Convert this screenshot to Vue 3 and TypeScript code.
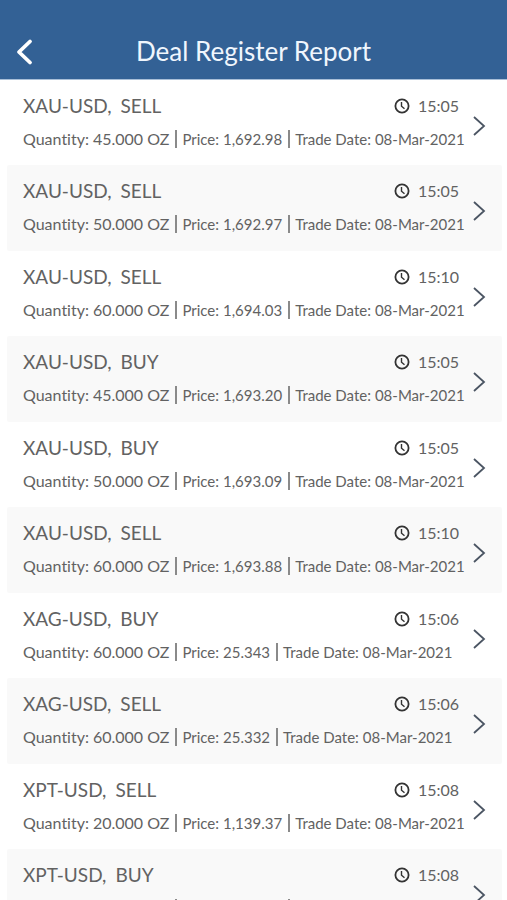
<script setup lang="ts">
interface Deal {
  pair: string
  side: 'BUY' | 'SELL'
  time: string
  quantity: string
  price: string
  date: string
}

function deal(pair: string, side: Deal['side'], time: string, quantity: string, price: string): Deal {
  return { pair, side, time, quantity, price, date: '08-Mar-2021' }
}

const deals: Deal[] = [
  deal('XAU-USD', 'SELL', '15:05', '45.000 OZ', '1,692.98'),
  deal('XAU-USD', 'SELL', '15:05', '50.000 OZ', '1,692.97'),
  deal('XAU-USD', 'SELL', '15:10', '60.000 OZ', '1,694.03'),
  deal('XAU-USD', 'BUY', '15:05', '45.000 OZ', '1,693.20'),
  deal('XAU-USD', 'BUY', '15:05', '50.000 OZ', '1,693.09'),
  deal('XAU-USD', 'SELL', '15:10', '60.000 OZ', '1,693.88'),
  deal('XAG-USD', 'BUY', '15:06', '60.000 OZ', '25.343'),
  deal('XAG-USD', 'SELL', '15:06', '60.000 OZ', '25.332'),
  deal('XPT-USD', 'SELL', '15:08', '20.000 OZ', '1,139.37'),
  deal('XPT-USD', 'BUY', '15:08', '20.000 OZ', '1,139.37'),
]
</script>

<template>
  <div class="page">
    <header class="bar">
      <button class="back" type="button" aria-label="Back">
        <svg viewBox="0 0 20 30" width="20" height="30" aria-hidden="true">
          <path d="M16 5.500 5 16 16 26.500" fill="none" stroke="#fff" stroke-width="3.800" stroke-linecap="round" stroke-linejoin="round" />
        </svg>
      </button>
      <h1 class="title">Deal Register Report</h1>
    </header>
    <ul class="list">
      <li v-for="(d, i) in deals" :key="i" class="item">
        <a class="link" href="#">
          <div class="content">
            <div class="top">
              <span class="name"><span>{{ d.pair }},</span><span>{{ d.side }}</span></span>
              <span class="time">
                <svg viewBox="0 0 16 16" width="16" height="16" fill="none" stroke="#333" aria-hidden="true">
                  <circle cx="8" cy="8" r="6.600" stroke-width="1.800" />
                  <path d="M7.500 4V8.200L10.500 10.800" stroke-width="1.400" />
                </svg>
                {{ d.time }}
              </span>
            </div>
            <div class="details">
              <span class="field quantity"><span>Quantity:</span><span>{{ d.quantity }}</span></span>
              <span class="field"><span>Price:</span><span>{{ d.price }}</span></span>
              <span class="field"><span>Trade Date:</span><span>{{ d.date }}</span></span>
            </div>
          </div>
          <svg class="chevron" viewBox="0 0 14 22" width="14" height="22" aria-hidden="true">
            <path d="M2 2 12 11 2 20" fill="none" stroke="#4b5563" stroke-width="1.800" />
          </svg>
        </a>
      </li>
    </ul>
  </div>
</template>

<style>
body {
  background: #fff;
}
</style>

<style scoped>
.page {
  height: 100vh;
  overflow: hidden;
  font-family: Lato, "Open Sans", sans-serif;
  font-variant-ligatures: none;
  color: #626262;
}
.bar {
  box-sizing: border-box;
  display: grid;
  grid-template-columns: 48px 1fr 48px;
  align-items: center;
  height: 80px;
  padding: 23px 0 0;
  background: #336195;
  border-bottom: 1px solid #a9bfd8;
}
.back {
  display: flex;
  justify-content: center;
  padding: 0;
  border: 0;
  background: none;
}
.title {
  margin: 0;
  text-align: center;
  color: #f0f6fd;
  font-size: 26px;
  font-weight: 400;
  line-height: 32px;
}
.list {
  margin: 0;
  padding: 0 5px 0 7px;
  list-style: none;
}
.item {
  height: 85px;
}
.item:nth-child(even) {
  height: 86px;
  background: #f9f9f9;
  border-radius: 2px;
}
.link {
  display: flex;
  align-items: flex-start;
  padding: 14px 16px 0;
  color: inherit;
  text-decoration: none;
}
.content {
  flex: 1;
  min-width: 0;
}
.top {
  display: flex;
  justify-content: space-between;
  align-items: center;
  height: 24px;
  padding-right: 13px;
}
.name {
  display: flex;
  gap: 9px;
  font-size: 19px;
  line-height: 24px;
}
.time {
  display: flex;
  align-items: center;
  gap: 8px;
  font-size: 16px;
  line-height: 20px;
}
.details {
  display: flex;
  align-items: center;
  height: 20px;
  margin-top: 11px;
  font-size: 15px;
  line-height: 20px;
  white-space: nowrap;
}
.field {
  display: flex;
  align-items: center;
  gap: 4px;
  height: 18px;
}
.quantity {
  font-size: 16px;
}
.field + .field {
  margin-left: 6px;
  padding-left: 5px;
  border-left: 2px solid #8a8a8a;
}
.chevron {
  flex: none;
  margin-top: 21px;
}
</style>
